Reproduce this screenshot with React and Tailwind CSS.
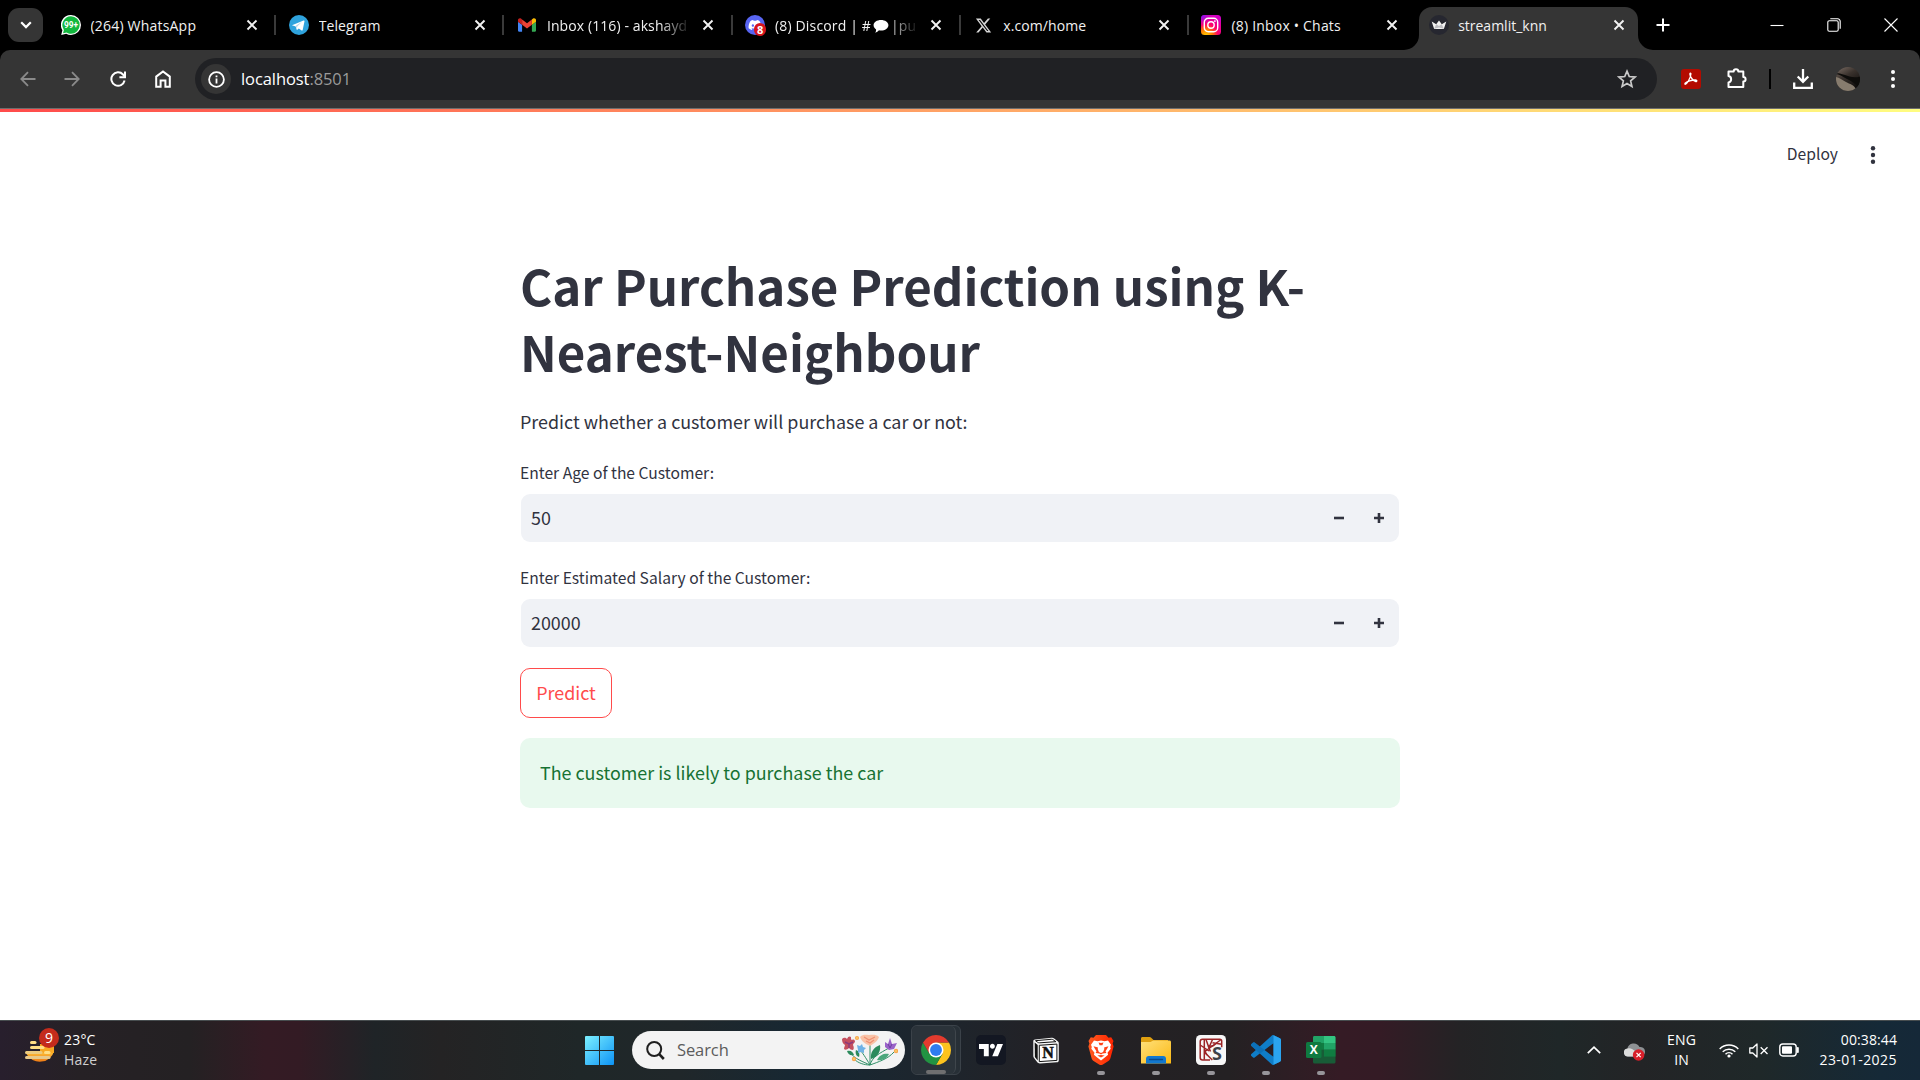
import React from "react";
import { FaDiscord, FaXTwitter } from "react-icons/fa6";
import { SiTradingview } from "react-icons/si";

const UI = "font-['Open_Sans','Noto_Sans',sans-serif]";
const BODY = "font-['Noto_Sans_CJK_SC','Open_Sans',sans-serif]";

function WhatsAppIcon() {
  return (
    <svg viewBox="0 0 20 20" className="size-5">
      <path d="M10 0a10 10 0 0 1 0 20c-1.800 0-3.400-.4-4.800-1.200L.2 20l1.200-4.800A10 10 0 0 1 10 0z" fill="#fff" />
      <path d="M10 1.300a8.700 8.700 0 0 1 0 17.400c-1.600 0-3.200-.5-4.500-1.300L2 18.300l.9-3.400A8.700 8.700 0 0 1 10 1.300z" fill="#12b83e" />
      <text x="10" y="13.400" textAnchor="middle" fontSize="9" fontWeight="700" fill="#fff" fontFamily="Roboto" textLength="14" lengthAdjust="spacingAndGlyphs">99+</text>
    </svg>
  );
}

function TelegramIcon() {
  return (
    <svg viewBox="0 0 20 20" className="size-5">
      <circle cx="10" cy="10" r="10" fill="#2fa3dd" />
      <path d="M3.600 9.900l11-4.400c.6-.2 1 .1.900.8l-1.800 8.600c-.1.600-.6.800-1.100.5l-2.800-2-1.400 1.300c-.3.300-.7.200-.8-.2l-.9-3-3-1c-.7-.2-.6-.5-.1-.6z" fill="#fff" />
      <path d="M6.800 10.700l6.200-3.900-4.700 4.700-.4 2.500z" fill="#b8d8ea" />
    </svg>
  );
}

function GmailIcon() {
  return (
    <svg viewBox="52 42 88 66" className="h-[14px] w-[18px]">
      <path fill="#4285f4" d="M58 108h14V74L52 59v43c0 3.320 2.690 6 6 6" />
      <path fill="#34a853" d="M120 108h14c3.320 0 6-2.690 6-6V59l-20 15" />
      <path fill="#fbbc04" d="M120 48v26l20-15v-8c0-7.420-8.470-11.650-14.400-7.200" />
      <path fill="#ea4335" d="M72 74V48l24 18 24-18v26L96 92" />
      <path fill="#c5221f" d="M52 51v8l20 15V48l-5.600-4.200c-5.940-4.450-14.400-.22-14.400 7.200" />
    </svg>
  );
}

function DiscordIcon() {
  return (
    <span className="relative flex size-5 items-center justify-center rounded-full bg-[#5865f2]">
      <FaDiscord className="size-[14px] text-white" />
      <span className="absolute -bottom-px -right-px flex h-[13px] w-[12px] items-center justify-center rounded-full bg-[#d8141c] text-[11px] leading-none font-bold text-white">8</span>
    </span>
  );
}

function InstagramIcon() {
  return (
    <svg viewBox="0 0 20 20" className="size-5">
      <defs>
        <radialGradient id="ig" cx="0.25" cy="1.05" r="1.1">
          <stop offset="0" stopColor="#ffd600" />
          <stop offset="0.3" stopColor="#ff7a00" />
          <stop offset="0.55" stopColor="#ff0169" />
          <stop offset="1" stopColor="#d300c5" />
        </radialGradient>
        <radialGradient id="ig2" cx="0" cy="0" r="0.6">
          <stop offset="0" stopColor="#6a1bff" />
          <stop offset="1" stopColor="#d300c5" stopOpacity="0" />
        </radialGradient>
      </defs>
      <rect width="20" height="20" rx="3.500" fill="url(#ig)" />
      <rect width="20" height="20" rx="3.500" fill="url(#ig2)" />
      <rect x="3.300" y="3.300" width="13.400" height="13.400" rx="4" fill="none" stroke="#fff" strokeWidth="1.400" />
      <circle cx="10" cy="10" r="3.200" fill="none" stroke="#fff" strokeWidth="1.400" />
      <circle cx="13.900" cy="6.100" r="0.9" fill="#fff" />
    </svg>
  );
}

function StreamlitIcon() {
  return (
    <svg viewBox="0 0 20 20" className="size-5">
      <circle cx="10" cy="10" r="10" fill="#262730" />
      <path d="M2.700 6.600l4.500 2.600L10 5.400l2.800 3.800 4.500-2.600-2.200 6.600c-.2.600-.6.900-1.200.9H6.100c-.6 0-1-.3-1.200-.9z" fill="#f2f2f2" />
      <path d="M7.200 9.200L10 11l2.800-1.800 2 4.600-4.800-1.400-4.800 1.400z" fill="#bdbdc2" />
    </svg>
  );
}

function CloseGlyph() {
  return (
    <svg viewBox="0 0 12 12" className="size-3 shrink-0" stroke="#f2f2f2" strokeWidth="1.900" fill="none">
      <path d="M1.500 1.500l9 9M10.500 1.500l-9 9" />
    </svg>
  );
}

const TABS = [
  { icon: <WhatsAppIcon />, title: "(264) WhatsApp", track: "tracking-[0.2px]" },
  { icon: <TelegramIcon />, title: "Telegram", track: "tracking-[0.1px]" },
  { icon: <GmailIcon />, title: "Inbox (116) - akshayd", fade: true, track: "tracking-[0.1px]" },
  {
    icon: <DiscordIcon />,
    title: (
      <>
        (8) Discord | #
        <svg viewBox="0 0 16 14" className="mx-[2px] inline-block h-[13px] w-4 align-[-2px]" fill="#fff">
          <path d="M8 0c4.400 0 8 2.400 8 5.600s-3.600 5.700-8 5.700c-.8 0-1.500-.1-2.200-.2C4.800 12.400 3.400 13.300 1.800 13.600c.7-.8 1-2 .9-3.500C1.100 9 0 7.400 0 5.600 0 2.400 3.600 0 8 0z" />
        </svg>
        |pu
      </>
    ),
    fade: true,
    track: "tracking-[0.15px]",
  },
  { icon: <FaXTwitter className="size-[17px] text-[#d6d6d6]" />, title: "x.com/home", track: "tracking-[0.1px]" },
  { icon: <InstagramIcon />, title: "(8) Inbox • Chats", track: "tracking-[0.2px]" },
];

function TabStrip() {
  return (
    <div className={`flex h-[50px] bg-black text-[14px] text-[#f1f1f1] ${UI}`}>
      <div className="ml-2 mt-2 flex h-[34px] w-[35px] items-center justify-center rounded-[11px] bg-[#353535]">
        <svg viewBox="0 0 12 8" className="h-2 w-3" fill="none" stroke="#fff" strokeWidth="2.200">
          <path d="M1.200 1.300L6 6.100l4.800-4.800" />
        </svg>
      </div>
      <div className="ml-[5px] flex">
        {TABS.map((t, i) => (
          <div key={i} className="flex h-[50px] w-[228.2px] items-center pl-[12.500px]">
            <span className="flex w-5 shrink-0 justify-center">{t.icon}</span>
            <span
              className={`ml-[10px] w-[144px] shrink-0 overflow-hidden whitespace-nowrap ${t.track} ${
                t.fade ? "[mask-image:linear-gradient(to_right,#000_112px,transparent_144px)]" : ""
              }`}
            >
              {t.title}
            </span>
            <span className="ml-[11px] flex">
              <CloseGlyph />
            </span>
            <span className={`ml-auto h-5 w-[2px] ${i < 5 ? "bg-[#3a3a3a]" : "bg-transparent"}`} />
          </div>
        ))}
      </div>
      <div className="-ml-[13px] flex items-end">
        <svg viewBox="0 0 15 15" className="size-[15px]" fill="#353535">
          <path d="M15 0v15H0A15 15 0 0 0 15 0z" />
        </svg>
        <div className="flex h-[43px] w-[219px] items-center rounded-t-[13px] bg-[#353535] pb-[7px] pl-[10px]">
          <StreamlitIcon />
          <span className="ml-[9px] w-[155px]">streamlit_knn</span>
          <CloseGlyph />
        </div>
        <svg viewBox="0 0 15 15" className="size-[15px]" fill="#353535">
          <path d="M0 0v15h15A15 15 0 0 1 0 0z" />
        </svg>
      </div>
      <svg viewBox="0 0 14 14" className="ml-[3px] mt-[18px] size-[14px]" stroke="#fff" strokeWidth="2">
        <path d="M7 .5v13M.5 7h13" />
      </svg>
      <div className="ml-auto flex items-center gap-[43px] pr-[22px] pb-px">
        <svg viewBox="0 0 14 14" className="size-[14px]" stroke="#fff" strokeWidth="1.100">
          <path d="M0.500 7.500h13" />
        </svg>
        <svg viewBox="0 0 14 14" className="size-[14px]" fill="none" stroke="#fff" strokeWidth="1.100">
          <rect x="0.800" y="2.800" width="10.400" height="10.400" rx="1.500" />
          <path d="M3.300.8h7.400a2.500 2.500 0 0 1 2.500 2.500v7.400" />
        </svg>
        <svg viewBox="0 0 14 14" className="size-[14px]" stroke="#fff" strokeWidth="1.100">
          <path d="M.5.5l13 13M13.500.5l-13 13" />
        </svg>
      </div>
    </div>
  );
}

function Toolbar() {
  return (
    <div className="bg-black">
      <div className={`flex h-[58px] items-center rounded-t-[10px] bg-[#353535] ${UI}`}>
        <svg viewBox="0 0 16 16" className="ml-5 size-4" fill="none" stroke="#8a8a8a" strokeWidth="1.800">
          <path d="M15.500 8H1.500M8 1.200L1.300 8 8 14.800" />
        </svg>
        <svg viewBox="0 0 16 16" className="ml-[28px] size-4" fill="none" stroke="#8a8a8a" strokeWidth="1.800">
          <path d="M.5 8h14M8 1.200L14.700 8 8 14.800" />
        </svg>
        <svg viewBox="0 0 16 16" className="ml-[30px] size-4" fill="none" stroke="#fff" strokeWidth="2">
          <path d="M14.600 9.600A6.700 6.700 0 1 1 13 3.500L14.600 5.400" />
          <path d="M15 .6v5.600H9.400" />
        </svg>
        <svg viewBox="0 0 16 18" className="ml-[29px] h-[18px] w-4" fill="none" stroke="#fff" strokeWidth="2">
          <path d="M1.200 16.800V6.600L8 1.400l6.800 5.200v10.200h-4.400v-6.200H5.600v6.200z" />
        </svg>
        <div className="ml-[24px] flex h-[42px] w-[1462px] items-center rounded-full bg-[#202124] pl-[6px]">
          <span className="flex size-[30px] items-center justify-center rounded-full bg-[#353535]">
            <svg viewBox="0 0 17 17" className="size-[17px]" fill="none" stroke="#fff" strokeWidth="1.800">
              <circle cx="8.500" cy="8.500" r="7.400" />
              <path d="M8.500 7.600v4.800M8.500 4.400v1.900" />
            </svg>
          </span>
          <span className="ml-[10px] pt-px text-[16.500px] tracking-[-0.080px] text-white">
            localhost<span className="text-[#9a9a9a]">:8501</span>
          </span>
          <svg viewBox="0 0 20 20" className="ml-auto mr-[20px] size-5" fill="none" stroke="#c9c9c9" strokeWidth="1.700">
            <path d="M10 2.200l2.250 5.350 5.750.5-4.370 3.800 1.320 5.650L10 14.500l-4.950 3 1.320-5.650L2 8.050l5.750-.5z" />
          </svg>
        </div>
        <svg viewBox="0 0 20 20" className="ml-[24px] size-5">
          <rect width="20" height="20" rx="3" fill="#b30b00" />
          <path d="M4.200 15.300c1.400-.2 5.400-5.700 5.700-10.300.1-1.400-1.200-1.200-1 .3.300 2.600 3.300 6.900 5.800 7.200 1.600.2 1.600-1.400-.2-1.500-3.500-.2-8.400 1.400-10.100 3-.6.600-.6 1.300-.2 1.300z" fill="none" stroke="#fff" strokeWidth="1.300" />
        </svg>
        <svg viewBox="0 0 22 22" className="ml-[25px] mb-[3px] size-[22px]" fill="none" stroke="#fff" strokeWidth="2">
          <path d="M2.500 4.500h5.200a2.300 2.300 0 0 1 4.600 0h5v5.400a2.300 2.300 0 0 1 0 4.600v5.500H2.500v-4.600a3.200 3.200 0 0 0 0-6.300z" strokeLinejoin="round" />
        </svg>
        <span className="ml-[21px] h-5 w-[2px] bg-black" />
        <svg viewBox="0 0 20 20" className="ml-[22px] size-5" fill="none" stroke="#fff" strokeWidth="2.300">
          <path d="M10 0v12.500M4.700 7.500L10 12.800l5.300-5.300M1.200 13.500v5.300h17.600v-5.300" />
        </svg>
        <svg viewBox="0 0 24 24" className="ml-[23px] size-6">
          <defs>
            <clipPath id="avatar"><circle cx="12" cy="12" r="12" /></clipPath>
            <linearGradient id="av" x1="0" y1="0" x2="0.600" y2="1">
              <stop offset="0" stopColor="#7d6f66" />
              <stop offset="0.450" stopColor="#3a322d" />
              <stop offset="1" stopColor="#0e0c0b" />
            </linearGradient>
          </defs>
          <g clipPath="url(#avatar)">
            <rect width="24" height="24" fill="url(#av)" />
            <path d="M-1 7c5 0 8 3 12 5s8 4 12 9l2-12C18 12 13 9 9 8S3 5-1 7z" fill="#0d0c0a" />
            <path d="M-1 10c4 0 7 3 11 5s8 3 10 7l-5 4H-1z" fill="#877c6e" />
          </g>
        </svg>
        <svg viewBox="0 0 4 18" className="ml-[31px] h-[18px] w-1" fill="#fff">
          <circle cx="2" cy="2" r="2" /><circle cx="2" cy="9" r="2" /><circle cx="2" cy="16" r="2" />
        </svg>
      </div>
      <div className="h-px bg-[#6d6d6d]" />
    </div>
  );
}

function NumberField({ label, value }) {
  return (
    <div className="flex flex-col">
      <label className="mb-[8px] h-[26px] text-[15.650px] leading-[26px]">{label}</label>
      <div className="mx-px flex h-12 items-center rounded-[9px] bg-[#f0f2f6] pl-[10px] pr-[15px]">
        <span className="pb-[2px] text-[17.900px] leading-6">{value}</span>
        <svg viewBox="0 0 10 10" className="ml-auto size-[10px]" stroke="#31333f" strokeWidth="2.600">
          <path d="M0 5h10" />
        </svg>
        <svg viewBox="0 0 10 10" className="ml-[30px] size-[10px]" stroke="#31333f" strokeWidth="2.600">
          <path d="M0 5h10M5 0v10" />
        </svg>
      </div>
    </div>
  );
}

function Page() {
  return (
    <main className={`flex h-[911px] flex-col bg-white text-[#31333f] ${BODY}`}>
      <div className="h-[3px] bg-[linear-gradient(90deg,#ff4b4b,#fffd80)]" />
      <div className="flex h-[84px] items-center justify-end pr-[45px]">
        <span className="text-[15.650px] leading-6">Deploy</span>
        <svg viewBox="0 0 4 18" className="ml-[33px] mt-px h-[18px] w-[4px] overflow-visible" fill="#31333f">
          <circle cx="2" cy="2.200" r="2.200" /><circle cx="2" cy="9" r="2.200" /><circle cx="2" cy="15.800" r="2.200" />
        </svg>
      </div>
      <div className="mx-auto flex w-[880px] flex-col pt-[56px]">
        <h1 className="text-[49.200px] leading-[66px] font-bold">
          Car Purchase Prediction using K-
          <br />
          Nearest-Neighbour
        </h1>
        <p className="mt-[21px] text-[17.900px] leading-8">Predict whether a customer will purchase a car or not:</p>
        <div className="mt-[23px]">
          <NumberField label="Enter Age of the Customer:" value="50" />
        </div>
        <div className="mt-[23px]">
          <NumberField label="Enter Estimated Salary of the Customer:" value="20000" />
        </div>
        <button className="mt-[21px] flex h-[50px] w-[92px] items-center justify-center rounded-[10px] border border-[#ff4b4b] pb-[2px] text-[17.900px] leading-8 text-[#ff4b4b]">
          Predict
        </button>
        <div className="mt-[20px] flex h-[70px] items-center rounded-[10px] bg-[#e8f9ee] pb-[2px] pl-5 text-[17.900px] leading-8 text-[#177233]">
          The customer is likely to purchase the car
        </div>
      </div>
    </main>
  );
}

function HazeIcon() {
  return (
    <span className="relative flex h-[30px] w-[34px] items-end">
      <svg viewBox="0 0 30 26" className="h-[26px] w-[30px]">
        <defs>
          <linearGradient id="sun" x1="0" y1="0" x2="0" y2="1">
            <stop offset="0" stopColor="#ffc83d" />
            <stop offset="1" stopColor="#ef7a14" />
          </linearGradient>
        </defs>
        <path d="M1.500 12h27.500a14.500 13 0 0 1-27.500 3z" fill="url(#sun)" />
        <rect x="15" y="5" width="14" height="9" fill="#f7a823" />
        <g strokeLinecap="round" strokeWidth="3" stroke="#ffdf85">
          <path d="M6.500 3.500H10" /><path d="M6.500 8.500H18" /><path d="M1.500 13.500H16" stroke="#eccb7f" />
          <path d="M20.500 13.500H24" /><path d="M1.500 18.500H24" stroke="#e8c98a" />
        </g>
      </svg>
      <span className="absolute -top-[7px] left-[14px] flex size-5 items-center justify-center rounded-full bg-[#c42b1c] text-[14px] leading-none text-white">9</span>
    </span>
  );
}

function Flowers() {
  return (
    <svg viewBox="0 0 56 32" className="h-8 w-14" fill="none">
      <g stroke="#2f9067" strokeWidth="1">
        <path d="M28 31C22 28 12 25 8 18M28 31V11M28 31c2-8 10-12 19-17M28 31c8-3 18-6 24-13M28 31C24 24 20 18 18 16M28 31c-6 0-12-2-16-6" />
      </g>
      <g fill="#2c8a5c">
        <path d="M29 25c-1-7 3-12 9-14 1 6-2 12-9 14z" />
        <path d="M35 26c3-6 8-7 12-6-2 4-6 7-12 6z" fill="#4aa77b" />
        <path d="M5 17c4-1 6 1 7 4-4 1-6-1-7-4zM14 16c3 1 4 4 3 7-3-1-4-4-3-7z" />
      </g>
      <path d="M18 3c3-3 6-2 9-2s7-1 10 2c-1 3-3 5-6 7l-3 2-4-2c-3-2-5-4-6-7z" fill="#f9c2a6" />
      <path d="M22 3l5 3 6-3M24 7l4 2 4-3" stroke="#ee8f72" strokeWidth="1.200" />
      <path d="M0 5c2-2 4-1 5 0 1-3 3-3 4-2 0 2 0 3 1 3 2-1 3 0 3 2-1 1-2 2-2 3 1 2 1 4 0 5-2 0-3-1-4-2-2 2-4 2-5 1 0-2 1-3 1-4-2-1-3-3-3-6z" fill="#c4505f" />
      <path d="M3 8l4 2 4-2M7 10v4" stroke="#8c3a7c" strokeWidth="1.400" />
      <path d="M15 11l3 1 2-2 1 3 3 1-2 2v3l-3-1-3 1v-3z" fill="#6fb2e6" />
      <path d="M43 8l3 2 2-6 2 6 5-1-3 6-5 1-4-3z" fill="#9a62c8" />
      <path d="M46 10l2 4 2-4" stroke="#6b3fa0" />
      <g fill="#f7a650">
        <circle cx="15" cy="4" r="2.100" /><circle cx="12" cy="25" r="2.200" /><circle cx="54" cy="17" r="2.200" />
      </g>
      <g fill="#fbd26a">
        <circle cx="15" cy="4" r="0.900" /><circle cx="12" cy="25" r="0.900" /><circle cx="54" cy="17" r="0.900" />
      </g>
    </svg>
  );
}

function ChromeIcon() {
  return (
    <svg viewBox="0 0 48 48" className="size-[30px]">
      <path d="M24 12h20.780A24 24 0 0 1 24 48l10.400-18z" fill="#fcc31e" />
      <path d="M13.600 30L3.220 12A24 24 0 0 0 24 48l10.400-18z" fill="#229342" />
      <path d="M13.600 30L3.220 12A24 24 0 0 1 44.780 12H24z" fill="#e33b2e" />
      <circle cx="24" cy="24" r="12" fill="#fff" />
      <circle cx="24" cy="24" r="9.500" fill="#2f7cf0" />
    </svg>
  );
}

function NotionIcon() {
  return (
    <svg viewBox="0 0 26 27" className="h-[27px] w-[26px]">
      <path d="M2 2.500L18.500.8c1.200 0 2 .2 3 1L25 4.600c.6.500.8 1 .8 1.800v16.800c0 1.200-.6 2-2 2.100L7 26.400c-1.200.1-2-.2-2.700-1.100L1 21c-.5-.7-.7-1.300-.7-2V4.200C.3 3.200.9 2.600 2 2.500z" fill="#f5f5f5" />
      <path d="M2.500 3.700L18.300 2.300c1 0 1.400.2 2 .6l2.600 1.800L6.700 5.800c-.9 0-1.500-.1-2.100-.6z" fill="#fff" stroke="#111" strokeWidth="1" />
      <path d="M1.700 5.500l3 2.500v15.600l-2.800-3.600z" fill="#111" />
      <path d="M6.300 8.300l17.600-1.200v16.300l-17.600 1.200z" fill="#fff" stroke="#111" strokeWidth="1" />
      <text x="15.100" y="21.300" textAnchor="middle" fontSize="16" fontWeight="700" fontFamily="Liberation Serif" fill="#111" stroke="#111" strokeWidth="0.500">N</text>
    </svg>
  );
}

function BraveIcon() {
  return (
    <svg viewBox="0 0 26 30" className="h-[30px] w-[26px]">
      <defs>
        <linearGradient id="brave" x1="0" y1="0" x2="1" y2="0">
          <stop offset="0" stopColor="#ff5a1f" />
          <stop offset="1" stopColor="#ff2400" />
        </linearGradient>
      </defs>
      <path d="M8 0h10l2.500 2.700 2.700-.4L25.500 6l-.9 2.500 1 3-3.200 11.800c-.4 1.300-1 2-2 2.800l-5.500 3.500c-1.300.7-2.500.7-3.800 0L5.600 26c-1-.7-1.600-1.500-2-2.800L.4 11.500l1-3L.5 6l2.300-3.700 2.700.4z" fill="url(#brave)" />
      <path d="M6 5.500l3.500.7 3.500-.7 3.500.7 3.500-.7 3 4.300-.8 2.200.5 1.800-3.200 4 .6 2-3.600 3L13 25.500l-3.500-2.700-3.600-3 .6-2-3.200-4 .5-1.800L3 9.800z" fill="#fff" />
      <path d="M5.500 11.300l4.500 1.200-.3 1.600 1.200 3L13 18l2.100-.9 1.200-3-.3-1.600 4.500-1.200-1.700 3-1.300 1.900.9 1.700-3.700.6L13 19.400l-1.700-.9-3.700-.6.900-1.700-1.300-1.900z" fill="#ff4218" />
      <path d="M9.300 20.600L13 22.600l3.700-2-3.700-.5zM10.500 7.600L13 8l2.500-.4-1.100 2.600H11.600z" fill="#ff4218" />
    </svg>
  );
}

function FolderIcon() {
  return (
    <svg viewBox="0 0 30 27" className="h-[27px] w-[30px]">
      <defs>
        <linearGradient id="fold" x1="0" y1="0" x2="1" y2="1">
          <stop offset="0" stopColor="#ffe07a" />
          <stop offset="1" stopColor="#fbb914" />
        </linearGradient>
      </defs>
      <path d="M0 1.500C0 .6.600 0 1.500 0h7c.7 0 1.200.2 1.700.7L12.500 3H27v6H0z" fill="#e0a010" />
      <path d="M0 5h9.500L12.300 3.500H28.500c.9 0 1.500.6 1.500 1.500v21.500H0z" fill="url(#fold)" />
      <path d="M5 26.500v-4.700c0-1.600 1-2.800 2.700-2.800h14.600c1.700 0 2.700 1.200 2.700 2.800v4.700z" fill="#1278cf" />
      <path d="M8.500 22.500h13" stroke="#0a4a8c" strokeWidth="1.300" strokeLinecap="round" />
    </svg>
  );
}

function SpyderIcon() {
  return (
    <svg viewBox="0 0 30 30" className="size-[30px]">
      <rect width="30" height="30" rx="4.500" fill="#f7f7f7" />
      <g fill="none" stroke="#9c2527" strokeWidth="1.500">
        <path d="M14 25H6.500C5 25 4.200 24.200 4.200 22.800V6.500C4.200 5 5 4.200 6.500 4.200h17.200c1.300 0 2 .8 2 2.100v6" />
        <path d="M8.300 4.200v20.600M8.300 17L24.500 5M8.300 17l8 8M4.200 10L13 16M10 4.500l3 8.500 1.500 3.500M16.500 4.500l-3.500 8M16.500 7.800l9.200 1.400" />
        <path d="M12 11c3 .8 5.500 0 7.500-2M9 14.500c0 2 .5 4 2 5.500" />
      </g>
      <text x="21" y="25.200" textAnchor="middle" fontSize="18" fontWeight="700" fontFamily="Open Sans" fill="#3d4248">S</text>
    </svg>
  );
}

function VsCodeIcon() {
  return (
    <svg viewBox="0 0 24 24" className="size-[30px]">
      <path
        fill="#0f7dc8"
        d="M23.150 2.587L18.210.210a1.494 1.494 0 0 0-1.705.290l-9.460 8.630-4.120-3.128a.999.999 0 0 0-1.276.057L.327 7.261A1 1 0 0 0 .326 8.740L3.899 12 .326 15.260a1 1 0 0 0 .001 1.479L1.650 17.940a.999.999 0 0 0 1.276.057l4.120-3.128 9.460 8.630a1.492 1.492 0 0 0 1.704.290l4.942-2.377A1.500 1.500 0 0 0 24 20.060V3.939a1.500 1.500 0 0 0-.850-1.352zm-5.146 14.861L10.826 12l7.178-5.448v10.896z"
      />
      <path fill="#2ba4f0" d="M18.004.250l5.146 2.337a1.500 1.500 0 0 1 .850 1.352V20.060a1.500 1.500 0 0 1-.848 1.352l-5.148 2.377z" />
      <path fill="#0a68ad" d="M7.045 9.130L2.925 6.002a1 1 0 0 0-1.276.057L.327 7.261A1 1 0 0 0 .326 8.740L3.899 12l3.200 2.900 3.727-2.900z" opacity="0.600" />
    </svg>
  );
}

function ExcelIcon() {
  return (
    <svg viewBox="0 0 30 28" className="h-7 w-[30px]">
      <rect x="7" y="0" width="22.500" height="27.500" rx="1.500" fill="#185c37" />
      <path d="M8.500 0H18v7H7V1.500C7 .6 7.600 0 8.500 0z" fill="#21a366" />
      <path d="M18 0h10c.9 0 1.500.6 1.500 1.500V7H18z" fill="#33c481" />
      <path d="M7 7h11v6.700H7z" fill="#107c41" />
      <path d="M18 7h11.500v6.700H18z" fill="#21a366" />
      <path d="M18 13.700h11.500v6.900H18z" fill="#107c41" />
      <rect x="0" y="6" width="15.500" height="16" rx="1.500" fill="#0f7a40" />
      <text x="7.800" y="18.200" textAnchor="middle" fontSize="12" fontWeight="700" fontFamily="Open Sans" fill="#fff">X</text>
    </svg>
  );
}

const APPS = [
  {
    icon: (
      <span className="flex size-[30px] items-center justify-center rounded-[5px] bg-[#131722]">
        <SiTradingview className="size-6 text-white" />
      </span>
    ),
  },
  { icon: <NotionIcon /> },
  { icon: <BraveIcon />, open: true },
  { icon: <FolderIcon />, open: true },
  { icon: <SpyderIcon />, open: true },
  { icon: <VsCodeIcon />, open: true },
  { icon: <ExcelIcon />, open: true },
];

function Taskbar() {
  return (
    <footer
      className={`flex h-[60px] items-center border-t border-[#474d4f] pb-px bg-[linear-gradient(90deg,#281f2d_0px,#262125_80px,#242123_190px,#341b24_265px,#331b24_300px,#1f2427_375px,#242324_440px,#1f2728_580px,#20272a_680px,#172833_800px,#1d252d_930px,#232125_1060px,#242123_1230px,#351b25_1340px,#341b25_1380px,#242325_1460px,#1f2728_1560px,#232426_1640px,#1f2829_1760px,#152937_1880px,#152838_1920px)] text-[14px] text-white ${UI}`}
    >
      <div className="ml-[25px] flex w-[560px] items-center">
        <HazeIcon />
        <div className="ml-[5px] flex flex-col pb-px leading-5">
          <span className="tracking-[0.2px]">23°C</span>
          <span className="tracking-[0.2px] text-[#cfcfcf]">Haze</span>
        </div>
      </div>
      <svg viewBox="0 0 29 29" className="size-[29px]">
        <defs>
          <linearGradient id="win" x1="0" y1="0" x2="29" y2="29" gradientUnits="userSpaceOnUse">
            <stop offset="0" stopColor="#7cf0ff" />
            <stop offset="1" stopColor="#0d93f5" />
          </linearGradient>
        </defs>
        <path d="M0 1a1 1 0 0 1 1-1h13v14H0zM15 0h13a1 1 0 0 1 1 1v13H15zM0 15h14v14H1a1 1 0 0 1-1-1zM15 15h14v13a1 1 0 0 1-1 1H15z" fill="url(#win)" />
      </svg>
      <div className="ml-[18px] flex h-[38px] w-[273px] items-center rounded-full bg-[#f3f3f3] pl-[14px] pr-[7px] text-[#5c5c5c]">
        <svg viewBox="0 0 19 19" className="size-[19px]" fill="none" stroke="#1f1f1f" strokeWidth="2">
          <circle cx="8.200" cy="8" r="7" />
          <path d="M13.200 13.200l4.600 4.800" strokeWidth="2.600" />
        </svg>
        <span className="ml-3 pt-px text-[16.500px] tracking-[-0.1px]">Search</span>
        <span className="ml-auto">
          <Flowers />
        </span>
      </div>
      <div className="ml-[6px] flex h-[50px] w-[50px] rounded-[6px] border border-[#3b4249] bg-[#272f36]">
        <div className="relative flex h-12 w-[44px] items-center justify-center rounded-[6px] border-r border-[#3f464c] bg-[#2b333a]">
          <span className="ml-[4px]">
            <ChromeIcon />
          </span>
          <span className="absolute bottom-0 left-[14px] h-1 w-5 rounded-full bg-[#6f6f70]" />
        </div>
      </div>
      <div className="ml-[2.500px] flex">
        {APPS.map((a, i) => (
          <div key={i} className="relative flex h-[50px] w-[55px] items-center justify-center">
            {a.icon}
            {a.open && <span className="absolute bottom-0 left-[23.500px] h-1 w-2 rounded-full bg-[#97959a]" />}
          </div>
        ))}
      </div>
      <div className="ml-auto flex items-center pr-[23px]">
        <svg viewBox="0 0 14 8" className="h-2 w-[14px]" fill="none" stroke="#fff" strokeWidth="1.700">
          <path d="M.8 7.200L7 1.200l6.200 6" />
        </svg>
        <svg viewBox="0 0 21 18" className="ml-[23px] mt-[3px] h-[18px] w-[21px]">
          <path d="M4 13.500A4 4 0 0 1 3.300 5.700 6.500 6.500 0 0 1 15.500 4a4.800 4.800 0 0 1 1.500 9.500z" fill="#8e9194" />
          <path d="M4 13.500A4 4 0 0 1 3.800 5.500c3-.8 4.800 1 8.700 3.500l-2 4.500z" fill="#dcdcdc" />
          <circle cx="14.600" cy="12" r="5.800" fill="#d81f2a" />
          <path d="M12.500 9.900l4.200 4.200M16.700 9.900l-4.200 4.200" stroke="#fff" strokeWidth="1.300" />
        </svg>
        <div className="ml-[21px] flex w-[31px] flex-col items-center leading-5">
          <span className="tracking-[0.2px]">ENG</span>
          <span>IN</span>
        </div>
        <svg viewBox="0 0 20 15" className="ml-[22px] h-[15px] w-5" fill="none" stroke="#fff" strokeWidth="1.500">
          <path d="M.7 6a13 13 0 0 1 18.600 0M3.700 8.700a9 9 0 0 1 12.600 0M6.500 11.200a5 5 0 0 1 7 0" />
          <circle cx="10" cy="13" r="1.600" fill="#fff" stroke="none" />
        </svg>
        <svg viewBox="0 0 20 15" className="ml-[10px] h-[15px] w-5" fill="none" stroke="#fff" strokeWidth="1.300">
          <path d="M.8 5h3L8 1v13L3.800 10h-3z" strokeLinejoin="round" />
          <path d="M11.700 4.200l6.800 6.800M18.500 4.200l-6.800 6.800" />
        </svg>
        <svg viewBox="0 0 20 14" className="ml-[10px] h-[14px] w-5" fill="none" stroke="#fff" strokeWidth="1.400">
          <rect x="0.800" y="1" width="16.400" height="12" rx="3" />
          <rect x="3" y="3.200" width="10" height="7.600" rx="1" fill="#fff" stroke="none" />
          <path d="M18.800 5v4" strokeWidth="2" strokeLinecap="round" />
        </svg>
        <div className="ml-[19px] flex w-[79px] flex-col items-end pb-px leading-5">
          <span className="tracking-[0.1px]">00:38:44</span>
          <span className="tracking-[0.450px]">23-01-2025</span>
        </div>
      </div>
    </footer>
  );
}

export default function App() {
  return (
    <div className="flex h-[1080px] w-[1920px] flex-col overflow-hidden bg-white">
      <TabStrip />
      <Toolbar />
      <Page />
      <Taskbar />
    </div>
  );
}
